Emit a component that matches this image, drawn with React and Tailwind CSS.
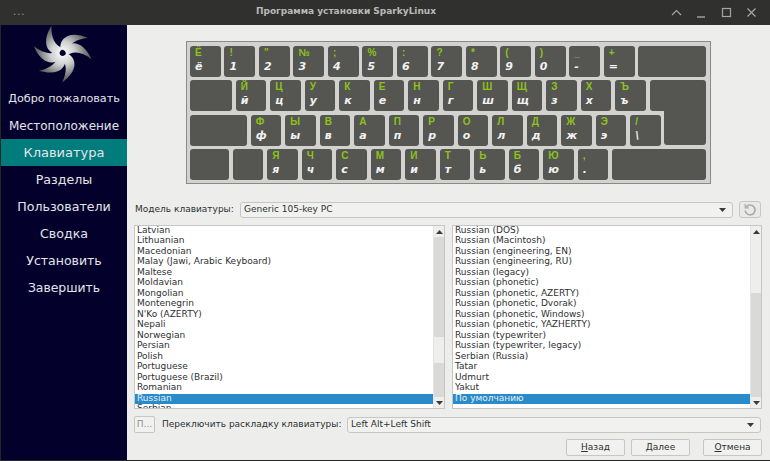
const rows = [
  [['Ё', 'ё'], ['!', '1'], ['"', '2'], ['№', '3'], [';', '4'], ['%', '5'], [':', '6'], ['?', '7'], ['*', '8'], ['(', '9'], [')', '0'], ['_', '-'], ['+', '=']],
  [['Й', 'й'], ['Ц', 'ц'], ['У', 'у'], ['К', 'к'], ['Е', 'е'], ['Н', 'н'], ['Г', 'г'], ['Ш', 'ш'], ['Щ', 'щ'], ['З', 'з'], ['Х', 'х'], ['Ъ', 'ъ']],
  [['Ф', 'ф'], ['Ы', 'ы'], ['В', 'в'], ['А', 'а'], ['П', 'п'], ['Р', 'р'], ['О', 'о'], ['Л', 'л'], ['Д', 'д'], ['Ж', 'ж'], ['Э', 'э'], ['/', '\\']],
  [['Я', 'я'], ['Ч', 'ч'], ['С', 'с'], ['М', 'м'], ['И', 'и'], ['Т', 'т'], ['Ь', 'ь'], ['Б', 'б'], ['Ю', 'ю'], [',', '.']],
];

const steps = [
  { label: 'Добро пожаловать', size: 'text-[11.2px] pt-[2px]' },
  { label: 'Местоположение', size: 'text-[12px]' },
  { label: 'Клавиатура', size: 'text-[13px]', active: true },
  { label: 'Разделы', size: 'text-[12.6px] pt-[2px]' },
  { label: 'Пользователи', size: 'text-[12.6px] pt-[2px]' },
  { label: 'Сводка', size: 'text-[12.6px] pt-[2px]' },
  { label: 'Установить', size: 'text-[12.5px] pt-[2px]' },
  { label: 'Завершить', size: 'text-[12.4px] pt-[2px]' },
];

const layouts = ['Latvian', 'Lithuanian', 'Macedonian', 'Malay (Jawi, Arabic Keyboard)', 'Maltese', 'Moldavian', 'Mongolian', 'Montenegrin', "N'Ko (AZERTY)", 'Nepali', 'Norwegian', 'Persian', 'Polish', 'Portuguese', 'Portuguese (Brazil)', 'Romanian', 'Russian', 'Serbian'];

const variants = ['Russian (DOS)', 'Russian (Macintosh)', 'Russian (engineering, EN)', 'Russian (engineering, RU)', 'Russian (legacy)', 'Russian (phonetic)', 'Russian (phonetic, AZERTY)', 'Russian (phonetic, Dvorak)', 'Russian (phonetic, Windows)', 'Russian (phonetic, YAZHERTY)', 'Russian (typewriter)', 'Russian (typewriter, legacy)', 'Serbian (Russia)', 'Tatar', 'Udmurt', 'Yakut', 'По умолчанию'];

function Logo() {
  const angles = [-22, 59, 102, 181, 233, 283];
  return (
    <svg width="62" height="60" viewBox="-29.6 -28 62 60" className="block">
      <defs>
        <radialGradient id="blade" gradientUnits="userSpaceOnUse" cx="0" cy="0" r="30">
          <stop offset="0" stopColor="#ffffff" />
          <stop offset="0.4" stopColor="#cfcfcf" />
          <stop offset="0.75" stopColor="#7c7c7c" />
          <stop offset="1" stopColor="#4a4a4a" />
        </radialGradient>
      </defs>
      {angles.map(a => (
        <path key={a} d="M-4 0 C-14 -4 -17 -17 0 -29.6 C-5 -19 -5 -9 3 -4 C-1 -3.5 -3 -2 -4 0 Z" fill="url(#blade)" transform={`rotate(${a})`} />
      ))}
    </svg>
  );
}

function Key({ top, bottom, className = 'w-[30.7px]' }) {
  return (
    <div className={`relative h-[30.7px] shrink-0 rounded-[3px] bg-[#555652] ${className}`}>
      {top && <span className="absolute left-[5px] top-[1px] text-[10px] leading-[12px] text-[#8cc21a] font-['Liberation_Sans',sans-serif] font-bold">{top}</span>}
      {bottom && <span className="absolute left-[5px] top-[15px] text-[11px] leading-[12px] text-[#f2f2f2] font-['DejaVu_Sans',sans-serif] font-bold italic">{bottom}</span>}
    </div>
  );
}

function Keyboard() {
  return (
    <div className="mx-auto w-[525px] h-[143px] shrink-0 border border-[#8a8b88] bg-[#d2d3d0] pl-[3.5px] pt-[4px] flex flex-col gap-[3.8px]">
      <div className="flex gap-[3.8px]">
        {rows[0].map(k => <Key key={k[1]} top={k[0]} bottom={k[1]} />)}
        <Key className="w-[67.7px]" />
      </div>
      <div className="flex gap-[3.8px]">
        <Key className="w-[42px]" />
        {rows[1].map(k => <Key key={k[1]} top={k[0]} bottom={k[1]} />)}
        <div className="relative">
          <Key className="w-[56px]" />
          {/* lower half of the L shaped enter key */}
          <div className="absolute right-0 top-[26px] w-[41.7px] h-[38.7px] rounded-b-[3px] bg-[#555652]" />
        </div>
      </div>
      <div className="flex gap-[3.8px]">
        <Key className="w-[57px]" />
        {rows[2].map(k => <Key key={k[1]} top={k[0]} bottom={k[1]} />)}
      </div>
      <div className="flex gap-[3.8px]">
        <Key className="w-[39px]" />
        <Key />
        {rows[3].map(k => <Key key={k[1]} top={k[0]} bottom={k[1]} />)}
        <Key className="w-[93.7px]" />
      </div>
    </div>
  );
}

function Arrow({ up }) {
  return (
    <svg width="7" height="4" viewBox="0 0 7 4" className="block">
      <path d={up ? 'M0 4 L3.5 0 L7 4 Z' : 'M0 0 L7 0 L3.5 4 Z'} fill="#3a3a3a" />
    </svg>
  );
}

function Combo({ text, className }) {
  return (
    <div className={`flex items-center justify-between h-[16px] rounded-[3px] border border-[#c6c7c4] bg-[#f1f2ef] pl-[3px] pr-[6px] ${className}`}>
      <span>{text}</span>
      <Arrow />
    </div>
  );
}

function ListBox({ items, selected, thumbClass, className }) {
  return (
    <div className={`flex h-[184px] border border-[#c6c7c4] bg-white ${className}`}>
      <div className="flex-1 min-w-0 overflow-hidden">
        {items.map(item => (
          <div key={item} className={`h-[10.47px] pl-[2px] leading-[9px] whitespace-nowrap ${item === selected ? 'bg-[#2a8bca] text-[#e6eef5]' : ''}`}>{item}</div>
        ))}
      </div>
      <div className="w-[11px] shrink-0 flex flex-col bg-[#d9dad7] border-l border-[#e4e5e2]">
        <div className="h-[11px] flex items-center justify-center bg-[#eeefec]"><Arrow up /></div>
        <div className="flex-1 relative">
          <div className={`absolute inset-x-0 bg-[#eeefec] ${thumbClass}`} />
        </div>
        <div className="h-[11px] flex items-center justify-center bg-[#eeefec]"><Arrow /></div>
      </div>
    </div>
  );
}

function NavButton({ first, rest, className = '' }) {
  return (
    <div className={`w-[59px] h-[17px] flex items-center justify-center rounded-[2px] border border-[#c6c7c4] bg-[#f1f2ef] ${className}`}>
      <span><span className="underline">{first}</span>{rest}</span>
    </div>
  );
}

export default function App() {
  return (
    <div className="w-[770px] h-[461px] flex flex-col overflow-hidden bg-[#262724] font-['DejaVu_Sans',sans-serif]">
      {/* Title bar */}
      <div className="h-[25px] shrink-0 flex items-center bg-[#30312e] text-[#b9bab7]">
        <div className="w-[38px] pl-[13px] pb-[3px] text-[10px] tracking-[1px] text-[#9a9b98]">...</div>
        <div className="flex-1 text-center text-[9px] font-semibold pr-[16px] pb-[1px]">Программа установки SparkyLinux</div>
        <div className="flex items-center gap-[12px] pr-[12px] text-[#a5a6a3]">
          <svg width="13" height="13" viewBox="0 0 13 13" fill="none" stroke="currentColor" strokeWidth="1.2"><path d="M2 9 L6.5 4.5 L11 9" /></svg>
          <svg width="13" height="13" viewBox="0 0 13 13" fill="none" stroke="currentColor" strokeWidth="1.4"><path d="M2 11 H10" /></svg>
          <svg width="13" height="13" viewBox="0 0 13 13" fill="none" stroke="currentColor" strokeWidth="1.2"><rect x="2.5" y="2.5" width="8" height="8" /></svg>
          <svg width="13" height="13" viewBox="0 0 13 13" fill="none" stroke="currentColor" strokeWidth="1.2"><path d="M2.5 2.5 L10.5 10.5 M10.5 2.5 L2.5 10.5" /></svg>
        </div>
      </div>

      <div className="flex flex-1 min-h-0 pl-[1px] pb-[1px]">
        {/* Sidebar */}
        <div className="w-[126px] shrink-0 bg-[#03012c] flex flex-col items-stretch">
          <div className="h-[60px] flex justify-center"><Logo /></div>
          <div>
            {steps.map(s => (
              <div key={s.label} className={`h-[27px] flex items-center justify-center text-[#e4e4e8] ${s.size} ${s.active ? 'bg-[#007c7c]' : ''}`}>{s.label}</div>
            ))}
          </div>
        </div>

        {/* Main panel */}
        <div className="flex-1 min-w-0 bg-[#edeeeb] pt-[16px] pl-[7px] pr-[8px] flex flex-col text-[9px] text-[#2e3032]">
          <Keyboard />

          <div className="flex items-center mt-[17px] h-[17px]">
            <span className="w-[106px] pl-[1px] whitespace-nowrap">Модель клавиатуры:</span>
            <Combo text="Generic 105-key PC" className="w-[493px]" />
            <div className="ml-[6px] w-[22px] h-[17px] flex items-center justify-center rounded-[3px] border border-[#c6c7c4] bg-[#e9eae7]">
              <svg width="14" height="14" viewBox="0 0 13 13" fill="none" stroke="#a9aaa7" strokeWidth="1.5"><path d="M3 3.5 A4.6 4.6 0 1 1 2 7" /><path d="M2 1 V4.5 H5.5" strokeWidth="1.1" /></svg>
            </div>
          </div>

          <div className="flex gap-[7px] mt-[7px]">
            <ListBox items={layouts} selected="Russian" thumbClass="top-[100px] h-[26px]" className="w-[311px]" />
            <ListBox items={variants} selected="По умолчанию" thumbClass="top-[0px] h-[56px]" className="w-[310px]" />
          </div>

          <div className="flex items-center mt-[7px] h-[17px]">
            <div className="w-[21px] h-[17px] flex items-center justify-center rounded-[2px] border border-[#c6c7c4] bg-[#f1f2ef] text-[#8d8e8b]">П...</div>
            <span className="ml-[7px] w-[185px] whitespace-nowrap">Переключить раскладку клавиатуры:</span>
            <Combo text="Left Alt+Left Shift" className="w-[414px]" />
          </div>

          <div className="flex justify-end mt-[6px]">
            <NavButton first="Н" rest="азад" />
            <NavButton first="Д" rest="алее" className="ml-[6px]" />
            <NavButton first="О" rest="тмена" className="ml-[13px]" />
          </div>
        </div>
      </div>
    </div>
  );
}
